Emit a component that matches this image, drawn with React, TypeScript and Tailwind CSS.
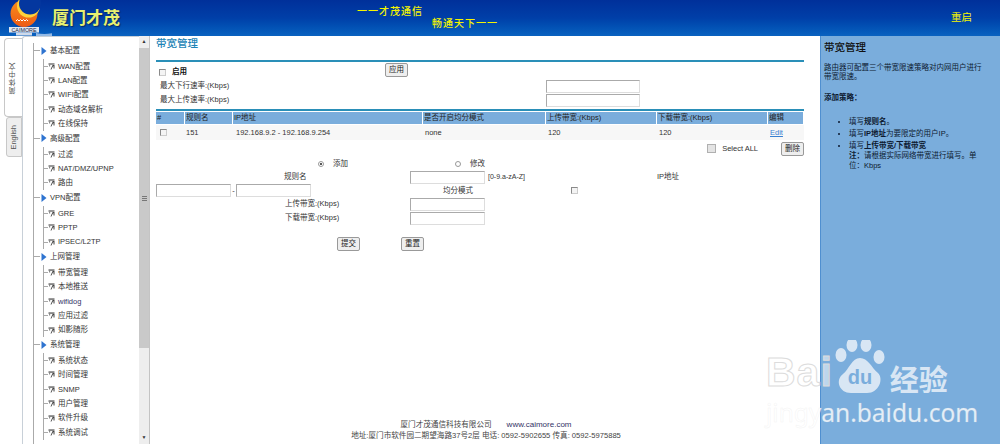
import React from "react";

const font = { fontFamily: '"Liberation Sans", "Noto Sans CJK SC", sans-serif' };

const tree = [
  { name: "基本配置", items: ["WAN配置", "LAN配置", "WIFI配置", "动态域名解析", "在线保持"] },
  { name: "高级配置", items: ["过滤", "NAT/DMZ/UPNP", "路由"] },
  { name: "VPN配置", items: ["GRE", "PPTP", "IPSEC/L2TP"] },
  { name: "上网管理", items: ["带宽管理", "本地推送", "wifidog", "应用过滤", "如影随形"] },
  { name: "系统管理", items: ["系统状态", "时间管理", "SNMP", "用户管理", "软件升级", "系统调试"] },
];

const DocIcon = () => (
  <svg width="7" height="7" viewBox="0 0 7 7" className="shrink-0">
    <path d="M0.5 0.5 H6.5 V1.6 H0.5 Z" fill="#333" />
    <path d="M1 1.6 H2.2 V3.5 H1 Z" fill="#888" />
    <path d="M2.5 6.5 L4.6 2 H6.5 V5.5 H5.5 V3.2 H5 L3.4 6.5 Z" fill="#444" />
  </svg>
);

const Arrow = () => (
  <svg width="6" height="8" viewBox="0 0 6 8" className="shrink-0">
    <path d="M0.5 0 L5.5 4 L0.5 8 Z" fill="#2f74d0" />
  </svg>
);

const Box = () => (
  <span className="block w-[7px] h-[7px] bg-[#f4f4f4] border border-[#8a8a8a] border-r-[#ccc] border-b-[#ccc]" />
);

const Btn = ({ children }: { children: React.ReactNode }) => (
  <button className="w-[23px] h-[14px] bg-[#eeeeee] border border-[#999] rounded-[2px] text-[7.5px] leading-none text-[#222]">
    {children}
  </button>
);

const Field = ({ w = "w-[75px]" }: { w?: string }) => (
  <span className={`block h-[13px] bg-white border border-[#aaa] border-r-[#ddd] border-b-[#ddd] ${w}`} />
);

const Radio = ({ on }: { on?: boolean }) => (
  <span className="flex items-center justify-center w-[6px] h-[6px] rounded-full border border-[#999] bg-white">
    {on && <span className="w-[2px] h-[2px] rounded-full bg-[#222]" />}
  </span>
);

const Logo = () => (
  <svg width="52" height="36" viewBox="0 0 52 36" className="shrink-0">
    <defs>
      <linearGradient id="moon" x1="0" y1="0" x2="0" y2="1">
        <stop offset="0" stopColor="#f8901c" />
        <stop offset="1" stopColor="#ee5a14" />
      </linearGradient>
    </defs>
    <path d="M36 33 Q44 35 54 33 L54 36 H36 Z" fill="#cfe0f5" opacity="0.7" />
    <circle cx="24" cy="13.5" r="13.5" fill="url(#moon)" />
    <circle cx="28.5" cy="6" r="11.5" fill="#ffd23a" />
    <circle cx="30" cy="3.5" r="11" fill="#04379f" />
    <path d="M16 21 q1.5 -3 3 0 q1.5 -3 3 0 q1.5 -3 3 0 q1.5 -3 3 0" stroke="#fff" strokeWidth="1" fill="none" />
    <rect x="9" y="27" width="30" height="5.5" fill="#dfe7f2" />
    <text x="24" y="31.8" textAnchor="middle" fontSize="5.4" fill="#17243f" fontFamily="Liberation Sans">CAIMORE</text>
    <rect x="16" y="32.5" width="16" height="3" fill="#cfdaea" />
  </svg>
);

function Sidebar() {
  return (
    <aside className="flex w-[150px] shrink-0 h-full">
      <div className="w-[22px] shrink-0 pt-[2px] flex flex-col items-end">
        <div className="w-[18px] h-[79px] bg-white border border-r-0 border-[#c8c8c8] rounded-l-[4px] flex items-center justify-center">
          <span className="[writing-mode:vertical-rl] rotate-180 text-[7px] text-[#555] tracking-[1px]">简体中文</span>
        </div>
        <div className="w-[16px] h-[40px] bg-[#eeeeee] border border-[#c8c8c8] rounded-l-[3px] flex items-center justify-center">
          <span className="[writing-mode:vertical-rl] rotate-180 text-[7.5px] text-[#555]">English</span>
        </div>
      </div>
      <div className="w-[117px] shrink-0 h-full border-l border-t border-[#c8d0d8] rounded-tl-[3px] pt-[6px] overflow-hidden">
        <div className="ml-[10px] border-l border-[#aaa] pb-10">
          {tree.map((g) => (
            <div key={g.name}>
              <div className="h-[15px] flex items-center text-[7.5px] text-[#333]">
                <span className="w-[6px] border-t border-[#aaa]" />
                <span className="ml-[1px] mr-[3px]"><Arrow /></span>
                {g.name}
              </div>
              <div className="ml-[9px] border-l border-[#aaa] mt-[1px]">
                {g.items.map((it) => (
                  <div key={it} className="h-[14.4px] flex items-center text-[7.5px] text-[#333]">
                    <span className="w-[4px] border-t border-[#aaa]" />
                    <span className="mr-[3px]"><DocIcon /></span>
                    <span className={it === "wifidog" ? "text-[#333366]" : ""}>{it}</span>
                  </div>
                ))}
              </div>
            </div>
          ))}
        </div>
      </div>
      <div className="w-[11px] shrink-0 h-full bg-[#eeeeee] border-r border-[#c4c4c4] flex flex-col items-center">
        <span className="h-[12px] flex items-center text-[5px] text-[#333]">▲</span>
        <div className="w-full h-[300px] bg-[#c9c9c9] flex items-center justify-center">
          <span className="w-[5px] h-[5px] border-y border-[#777] flex items-center">
            <span className="w-full border-t border-[#777]" />
          </span>
        </div>
        <span className="mt-auto h-[12px] flex items-center text-[5px] text-[#333]">▼</span>
      </div>
    </aside>
  );
}

function Main() {
  const cols = "grid grid-cols-[29px_48px_190px_123px_111px_111px_36px]";
  return (
    <main className="flex-1 h-full flex flex-col text-[7.5px] text-[#333] pl-[6px] pr-[16px]">
      <h1 className="text-[10.5px] leading-[13px] mt-[1px] font-medium text-[#1c84b6]">带宽管理</h1>
      <div className="mt-[10px] border-t-2 border-[#2a8fb8]" />
      <div className="mt-[1px] h-[14px] flex items-end">
        <span className="ml-[3px] mb-[1px]"><Box /></span>
        <b className="ml-[6px] text-[#111]">启用</b>
        <span className="ml-[198px] self-start"><Btn>应用</Btn></span>
      </div>
      <div className="mt-[2px] h-[14px] flex items-center pl-[4px]">
        <span className="w-[386px]">最大下行速率:(Kbps)</span>
        <Field w="w-[94px]" />
      </div>
      <div className="h-[14px] flex items-center pl-[4px]">
        <span className="w-[386px]">最大上传速率:(Kbps)</span>
        <Field w="w-[94px]" />
      </div>
      <div className="mt-[2px] border-t-2 border-[#2a8fb8]" />
      <div className={`${cols} mt-[1px] h-[12px] items-center`}>
        {["#", "规则名", "IP地址", "是否开启均分模式", "上传带宽:(Kbps)", "下载带宽:(Kbps)", "编辑"].map((h) => (
          <span key={h} className="bg-[#7aaddc] h-full pl-[1px] mr-[1px] flex items-center text-[#222]">{h}</span>
        ))}
      </div>
      <div className={`${cols} mt-[1px] h-[15px] items-center bg-[#f7f7f7]`}>
        <span className="pl-[4px]"><Box /></span>
        <span className="pl-[1px]">151</span>
        <span className="pl-[3px]">192.168.9.2 - 192.168.9.254</span>
        <span className="pl-[2px]">none</span>
        <span className="pl-[2px]">120</span>
        <span className="pl-[2px]">120</span>
        <span className="pl-[2px] text-[#3a80d0] underline">Edit</span>
      </div>
      <div className="mt-[1px] h-[15px] flex items-center justify-end">
        <span className="w-[9px] h-[9px] bg-[#e4e4e4] border border-[#b0b0b0]" />
        <span className="ml-[6px] mr-[23px]">Select ALL</span>
        <Btn>删除</Btn>
      </div>
      <div className="mt-[3px] h-[10px] flex items-center">
        <span className="ml-[162px]"><Radio on /></span>
        <span className="ml-[9px]">添加</span>
        <span className="ml-[107px]"><Radio /></span>
        <span className="ml-[9px]">修改</span>
      </div>
      <div className="mt-[1px] h-[14px] flex items-center">
        <span className="w-[254px] pl-[128px]">规则名</span>
        <Field />
        <span className="w-[172px] pl-[3px] text-[7px]">[0-9.a-zA-Z]</span>
        <span>IP地址</span>
      </div>
      <div className="h-[13px] flex items-center">
        <Field w="w-[75px]" />
        <span className="w-[5px] text-center">-</span>
        <Field w="w-[75px]" />
        <span className="ml-[132px] w-[128px]">均分模式</span>
        <Box />
      </div>
      <div className="h-[14px] flex items-center">
        <span className="w-[254px] pl-[129px]">上传带宽:(Kbps)</span>
        <Field />
      </div>
      <div className="h-[14px] flex items-center">
        <span className="w-[254px] pl-[129px]">下载带宽:(Kbps)</span>
        <Field />
      </div>
      <div className="mt-[12px] flex pl-[181px] gap-[41px]">
        <Btn>提交</Btn>
        <Btn>重置</Btn>
      </div>
      <footer className="mt-auto pb-[3px] text-center text-[7.6px] leading-[11px] text-[#444] pl-[12px]">
        <div>厦门才茂通信科技有限公司<span className="ml-[15px] text-[#333366] text-[8px]">www.caimore.com</span></div>
        <div>地址:厦门市软件园二期望海路37号2层 电话: 0592-5902655 传真: 0592-5975885</div>
      </footer>
    </main>
  );
}

function Help() {
  return (
    <aside className="w-[180px] shrink-0 h-full bg-[#7aaddc] border-l border-[#4f8fd0] px-[3px] text-[7.5px] leading-[9px] text-[#0d1a30]">
      <h2 className="mt-[4px] text-[10.5px] leading-[14px] font-medium text-[#111]">带宽管理</h2>
      <p className="mt-[9px] w-[160px]">路由器可配置三个带宽限速策略对内网用户进行带宽限速。</p>
      <p className="mt-[12px] font-bold">添加策略：</p>
      <ul className="mt-[15px] ml-[25px] list-disc w-[132px] space-y-[3px]">
        <li>填写<b>规则名</b>。</li>
        <li>填写<b>IP地址</b>为要限定的用户IP。</li>
        <li className="leading-[10px]">
          <div className="font-bold"><span className="font-normal">填写</span>上传带宽/下载带宽</div>
          <div><b>注：</b>请根据实际网络带宽进行填写。单位：Kbps</div>
        </li>
      </ul>
    </aside>
  );
}

const Watermark = () => (
  <div className="absolute left-[766px] top-[340px] w-[190px] h-[90px] pointer-events-none">
    <div className="flex items-end h-[54px]">
      <span className="text-[41px] leading-[44px] font-bold text-white/50 tracking-[1px] [-webkit-text-stroke:1px_#dcdcdc]" style={{ fontFamily: '"Liberation Sans", sans-serif' }}>
        Bai
      </span>
      <svg width="54" height="54" viewBox="0 0 50 54" className="ml-0 shrink-0">
        <g fill="#d8e6f4">
          <ellipse cx="6" cy="15" rx="5.5" ry="7" />
          <ellipse cx="17" cy="5" rx="5.5" ry="7" />
          <ellipse cx="31" cy="5" rx="5.5" ry="7" />
          <ellipse cx="44" cy="17" rx="5.5" ry="7" />
          <path d="M25 18 C33 18 36 27 43 33 C49 39 44 53 32 53 H16 C4 53 0 40 8 34 C14 29 17 18 25 18 Z" />
        </g>
        <text x="25" y="44" textAnchor="middle" fontSize="20" fontWeight="700" fill="#7aaddc" fontFamily="Liberation Sans">du</text>
      </svg>
      <span className="ml-[3px] text-[29px] leading-[32px] font-bold text-[#d8e6f4]" style={{ fontFamily: '"Noto Sans CJK SC", sans-serif' }}>经验</span>
    </div>
    <div className="mt-[5px] text-[24.5px] leading-[28px] text-white/80 [-webkit-text-stroke:0.5px_#dcdcdc55] whitespace-nowrap" style={{ fontFamily: '"Noto Sans", sans-serif' }}>
      jingyan.baidu.com
    </div>
  </div>
);

export default function App() {
  return (
    <div className="relative w-[1000px] h-[444px] overflow-hidden bg-white" style={font}>
      <header className="h-[36px] flex items-center bg-gradient-to-b from-[#00309a] via-[#003fa8] to-[#0a62c0] text-[#f4f400]">
        <Logo />
        <span className="text-[17px] font-bold leading-none text-[#e8f070] [text-shadow:1px_1px_1px_#0a2a60]">厦门才茂</span>
        <div className="ml-[237px] text-[10px] font-medium leading-[12px] tracking-[1px] mt-[-1px]">
          <div>一一才茂通信</div>
          <div className="ml-[75px]">畅通天下一一</div>
        </div>
        <button className="ml-auto mr-[28px] text-[10.5px]">重启</button>
      </header>
      <div className="flex h-[408px]">
        <Sidebar />
        <Main />
        <Help />
      </div>
      <Watermark />
    </div>
  );
}
